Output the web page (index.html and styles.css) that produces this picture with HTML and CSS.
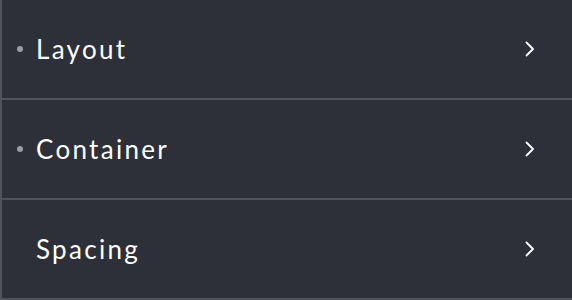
FILE: index.html
```html
<!DOCTYPE html>
<html lang="en">
<head>
    <meta charset="UTF-8">
    <meta name="viewport" content="width=device-width, initial-scale=1.0">
    <title>Settings Menu</title>
    <link rel="stylesheet" href="styles.css">
</head>
<body>
    <ul class="menu">
        <li class="menu-item">
            <span class="dot"></span>
            <span class="label">Layout</span>
            <svg class="chevron" width="10" height="16" viewBox="0 0 10 16"><path d="M1.5 1.5 L8 8 L1.5 14.5" fill="none" stroke="#fff" stroke-width="1.8" stroke-linecap="round" stroke-linejoin="round"/></svg>
        </li>
        <li class="menu-item">
            <span class="dot"></span>
            <span class="label">Container</span>
            <svg class="chevron" width="10" height="16" viewBox="0 0 10 16"><path d="M1.5 1.5 L8 8 L1.5 14.5" fill="none" stroke="#fff" stroke-width="1.8" stroke-linecap="round" stroke-linejoin="round"/></svg>
        </li>
        <li class="menu-item">
            <span class="dot hidden"></span>
            <span class="label">Spacing</span>
            <svg class="chevron" width="10" height="16" viewBox="0 0 10 16"><path d="M1.5 1.5 L8 8 L1.5 14.5" fill="none" stroke="#fff" stroke-width="1.8" stroke-linecap="round" stroke-linejoin="round"/></svg>
        </li>
    </ul>
</body>
</html>
```

FILE: styles.css
```css
body {
    margin: 0;
    background-color: #2d3039;
    font-family: Lato, "Open Sans", sans-serif;
}

.menu {
    list-style: none;
    margin: 0;
    padding: 0;
    border-left: 2px solid #50535b;
    height: 300px;
    box-sizing: border-box;
}

.menu-item {
    display: flex;
    align-items: center;
    height: 98px;
    border-bottom: 2px solid #50535b;
    padding-left: 15px;
    padding-right: 37px;
    color: #fff;
}

.dot {
    width: 6px;
    height: 6px;
    border-radius: 50%;
    background-color: #9a9ca3;
    margin-right: 13px;
}

.dot.hidden {
    visibility: hidden;
}

.label {
    flex: 1;
    font-size: 26px;
    letter-spacing: 2.3px;
    margin-top: -1px;
}

.chevron {
    display: block;
}
```
